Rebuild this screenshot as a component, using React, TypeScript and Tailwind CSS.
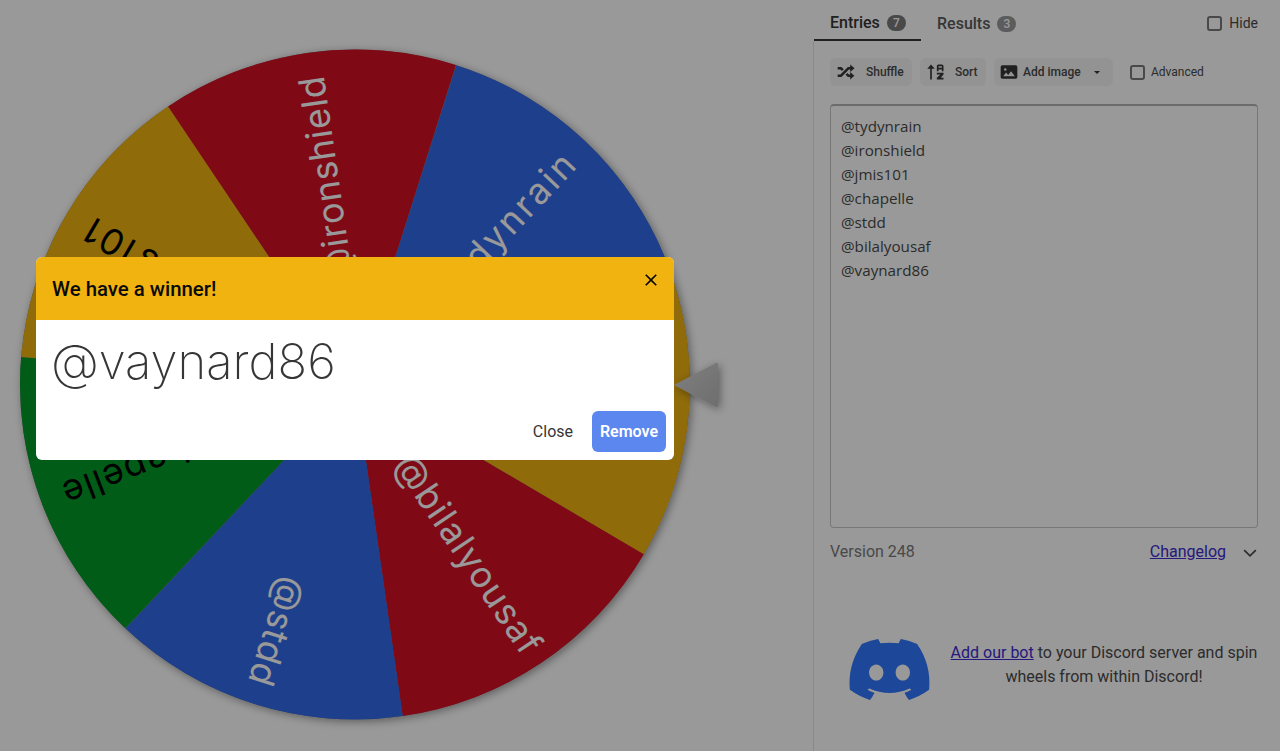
import { FaDiscord } from "react-icons/fa6";

const SLICES = [
  { name: "@bilalyousaf", color: "#d50f25", text: "#ffffff", start: 30.4, length: 232, end: 320 },
  { name: "@stdd", color: "#3369e8", text: "#ffffff", start: 81.8, length: 112, end: 315 },
  { name: "@chapelle", color: "#009925", text: "#000000", start: 133.3, length: 190, end: 311 },
  { name: "@jmis101", color: "#eeb211", text: "#000000", start: 184.7, length: 170, end: 310 },
  { name: "@ironshield", color: "#d50f25", text: "#ffffff", start: 236.1, length: 208, end: 311 },
  { name: "@tydynrain", color: "#3369e8", text: "#ffffff", start: 287.6, length: 218, end: 311 },
  { name: "@vaynard86", color: "#eeb211", text: "#000000", start: 339, length: 224, end: 316 },
];

const CX = 355;
const CY = 384.5;
const R = 335;
const SWEEP = 360 / 7;

function pt(angle: number) {
  const a = (angle * Math.PI) / 180;
  return `${CX + R * Math.cos(a)} ${CY + R * Math.sin(a)}`;
}

function Wheel() {
  return (
    <svg width="760" height="751" viewBox="0 0 760 751" className="block">
      <defs>
        <filter id="shadow" x="-30%" y="-30%" width="160%" height="160%">
          <feDropShadow dx="2" dy="2" stdDeviation="4" floodColor="#000000" floodOpacity="0.4" />
        </filter>
        <linearGradient id="pointer" x1="0" y1="0" x2="1" y2="1">
          <stop offset="0" stopColor="#d5d5d5" />
          <stop offset="1" stopColor="#b8b8b8" />
        </linearGradient>
      </defs>
      <circle cx={CX} cy={CY} r={R} fill="#888888" filter="url(#shadow)" />
      {SLICES.map((s) => (
        <path
          key={s.name}
          d={`M${CX} ${CY}L${pt(s.start)}A${R} ${R} 0 0 1 ${pt(s.start + SWEEP)}Z`}
          fill={s.color}
        />
      ))}
      {SLICES.map((s) => (
        <text
          key={s.name}
          transform={`translate(${CX} ${CY}) rotate(${s.start + SWEEP / 2})`}
          x={s.end}
          y="0"
          textAnchor="end"
          dominantBaseline="central"
          fontSize="36"
          fontWeight="400"
          fontFamily="Inter, sans-serif"
          fill={s.text}
          textLength={s.length}
          lengthAdjust="spacing"
        >
          {s.name}
        </text>
      ))}
      <path
        d="M674 385L716 363Q718 362 718 365V405Q718 408 716 407Z"
        fill="url(#pointer)"
        filter="url(#shadow)"
      />
    </svg>
  );
}

function Check({ label, small }: { label: string; small?: boolean }) {
  return (
    <div className={`flex items-center ${small ? "gap-[6px] text-xs" : "gap-[7px] text-sm"} text-[#4a4a4a]`}>
      <span className="w-[15px] h-[15px] rounded-[3px] border-2 border-[#7a7a7a] bg-white" />
      {label}
    </div>
  );
}

function ToolButton({ icon, label, className }: { icon: React.ReactNode; label: string; className: string }) {
  return (
    <button className={`h-[28px] rounded-[6px] bg-[#f5f5f5] flex items-center text-xs font-medium text-[#4a4a4a] ${className}`}>
      {icon}
      {label}
    </button>
  );
}

export default function App() {
  return (
    <div className="relative flex h-[751px] w-[1280px] overflow-hidden bg-white font-['Roboto',sans-serif]">
      <div className="w-[813px] shrink-0">
        <Wheel />
      </div>

      <div className="w-[467px] shrink-0 flex flex-col">
        <div className="flex h-[41px] items-start">
          <div className="ml-px w-[107px] h-[41px] border-b-2 border-[#363636] pl-[16px] pt-[7px] flex items-center gap-[7px] text-base font-medium text-[#363636]">
            Entries
            <span className="w-[19px] h-[16px] rounded-full bg-[#7a7a7a] text-white text-xs flex items-center justify-center">7</span>
          </div>
          <div className="pl-[16px] pt-[7px] h-[41px] flex items-center gap-[7px] text-base font-medium text-[#5a5a5a]">
            Results
            <span className="w-[19px] h-[16px] rounded-full bg-[#9a9a9a] text-white text-xs flex items-center justify-center">3</span>
          </div>
          <div className="ml-auto pt-[13px] pr-[22px]">
            <Check label="Hide" />
          </div>
        </div>

        <div className="flex-1 border-l border-[#e4e4e4] pl-[16px] pr-[22px]">
          <div className="flex items-center mt-[17px] h-[28px]">
            <ToolButton
              className="w-[82px] pl-[6px] gap-[10px]"
              label="Shuffle"
              icon={
                <svg width="20" height="20" viewBox="0 0 24 24" fill="#363636">
                  <path d="M17,3L22.25,7.5L17,12L22,16.5L17,21V18H14.26L11.44,15.18L13.56,13.06L15.5,15H17V12L17,9H15.5L6.5,18H2V15H5.26L14.26,6H17V3M2,6H6.5L9.32,8.82L7.2,10.94L5.26,9H2V6Z" />
                </svg>
              }
            />
            <ToolButton
              className="w-[66px] ml-[8px] pl-[6px] gap-[9px]"
              label="Sort"
              icon={
                <svg width="20" height="20" viewBox="0 0 24 24" fill="#363636" fillRule="evenodd">
                  <path d="M7 8H10.5L6 3L1.5 8H5V21H7Z" />
                  <path d="M21 13V15L17.67 19H21V21H13V19L17.33 15H13V13ZM15 3C13.9 3 13 3.9 13 5V11H15V9H19V11H21V5C21 3.9 20.1 3 19 3ZM19 7H15V5H19Z" />
                </svg>
              }
            />
            <ToolButton
              className="w-[119px] ml-[8px] pl-[5px] gap-[4px]"
              label="Add image"
              icon={
                <svg width="20" height="20" viewBox="0 0 24 24" fill="#363636" fillRule="evenodd">
                  <path d="M20,4A2,2 0 0,1 22,6V18A2,2 0 0,1 20,20H4C2.89,20 2,19.1 2,18V6C2,4.89 2.89,4 4,4H20M5,17H19L14.5,11L11,15.5L8.5,12.5L5,17ZM6 9a1.5 1.5 0 1 0 3 0a1.5 1.5 0 1 0-3 0Z" />
                </svg>
              }
            />
            <span className="ml-[-19px] mr-[16px] w-0 h-0 border-x-[3.5px] border-x-transparent border-t-[3.5px] border-t-[#363636] relative" />
            <div className="ml-[14px]">
              <Check label="Advanced" small />
            </div>
          </div>

          <div className="mt-[18px] h-[424px] rounded-[4px] border border-[#c8c8c8] border-t-2 border-t-[#b5b5b5] bg-white pl-[10px] pt-[8px] font-['Open_Sans',sans-serif] text-[15.2px] leading-[24px] text-[#4a4a4a]">
            {["@tydynrain", "@ironshield", "@jmis101", "@chapelle", "@stdd", "@bilalyousaf", "@vaynard86"].map((e) => (
              <div key={e}>{e}</div>
            ))}
          </div>

          <div className="flex items-center mt-[12px] h-[24px] text-base -mr-[2px]">
            <span className="text-[#7a7a7a]">Version 248</span>
            <a className="ml-auto text-[#3d2bd1] underline">Changelog</a>
            <svg width="20" height="20" viewBox="0 0 24 24" fill="none" stroke="#4a4a4a" strokeWidth="2" className="ml-[14px] mt-[2px]">
              <path d="M5 8.5L12 15.5L19 8.5" />
            </svg>
          </div>

          <div className="flex items-start mt-[62px] ml-[16px] w-[414px]">
            <FaDiscord className="w-[87px] h-[87px] shrink-0 text-[#3178ff]" />
            <p className="ml-[15px] mt-[15px] text-center text-base leading-[24px] text-[#4a4a4a] w-[312px] shrink-0">
              <a className="text-[#3d2bd1] underline">Add our bot</a> to your Discord server and spin wheels from within Discord!
            </p>
          </div>
        </div>
      </div>

      <div className="absolute inset-0 bg-black/40" />

      <div className="absolute left-[36px] top-[257px] w-[638px] h-[203px] rounded-[6px] overflow-hidden bg-white flex flex-col">
        <div className="h-[63px] bg-[#f0b30f] flex items-center pl-[16px] pr-[13px] pt-[2px] text-[20.4px] font-medium text-[#0a0a0a]">
          We have a winner!
          <svg width="20" height="20" viewBox="0 0 24 24" fill="#0a0a0a" className="ml-auto mb-[19px]">
            <path d="M19 6.41L17.59 5 12 10.59 6.41 5 5 6.41 10.59 12 5 17.59 6.41 19 12 13.41 17.59 19 19 17.59 13.41 12z" />
          </svg>
        </div>
        <div className="pl-[15px] pt-[10px] h-[91px] font-['Inter',sans-serif] font-extralight text-[49px] leading-[64px] text-[#363636]">
          @vaynard86
        </div>
        <div className="flex items-center justify-end pr-[8px] gap-[19px] text-base">
          <span className="text-[#363636]">Close</span>
          <button className="w-[74px] h-[41px] rounded-[6px] bg-[#5c87ee] text-white font-semibold">Remove</button>
        </div>
      </div>
    </div>
  );
}
